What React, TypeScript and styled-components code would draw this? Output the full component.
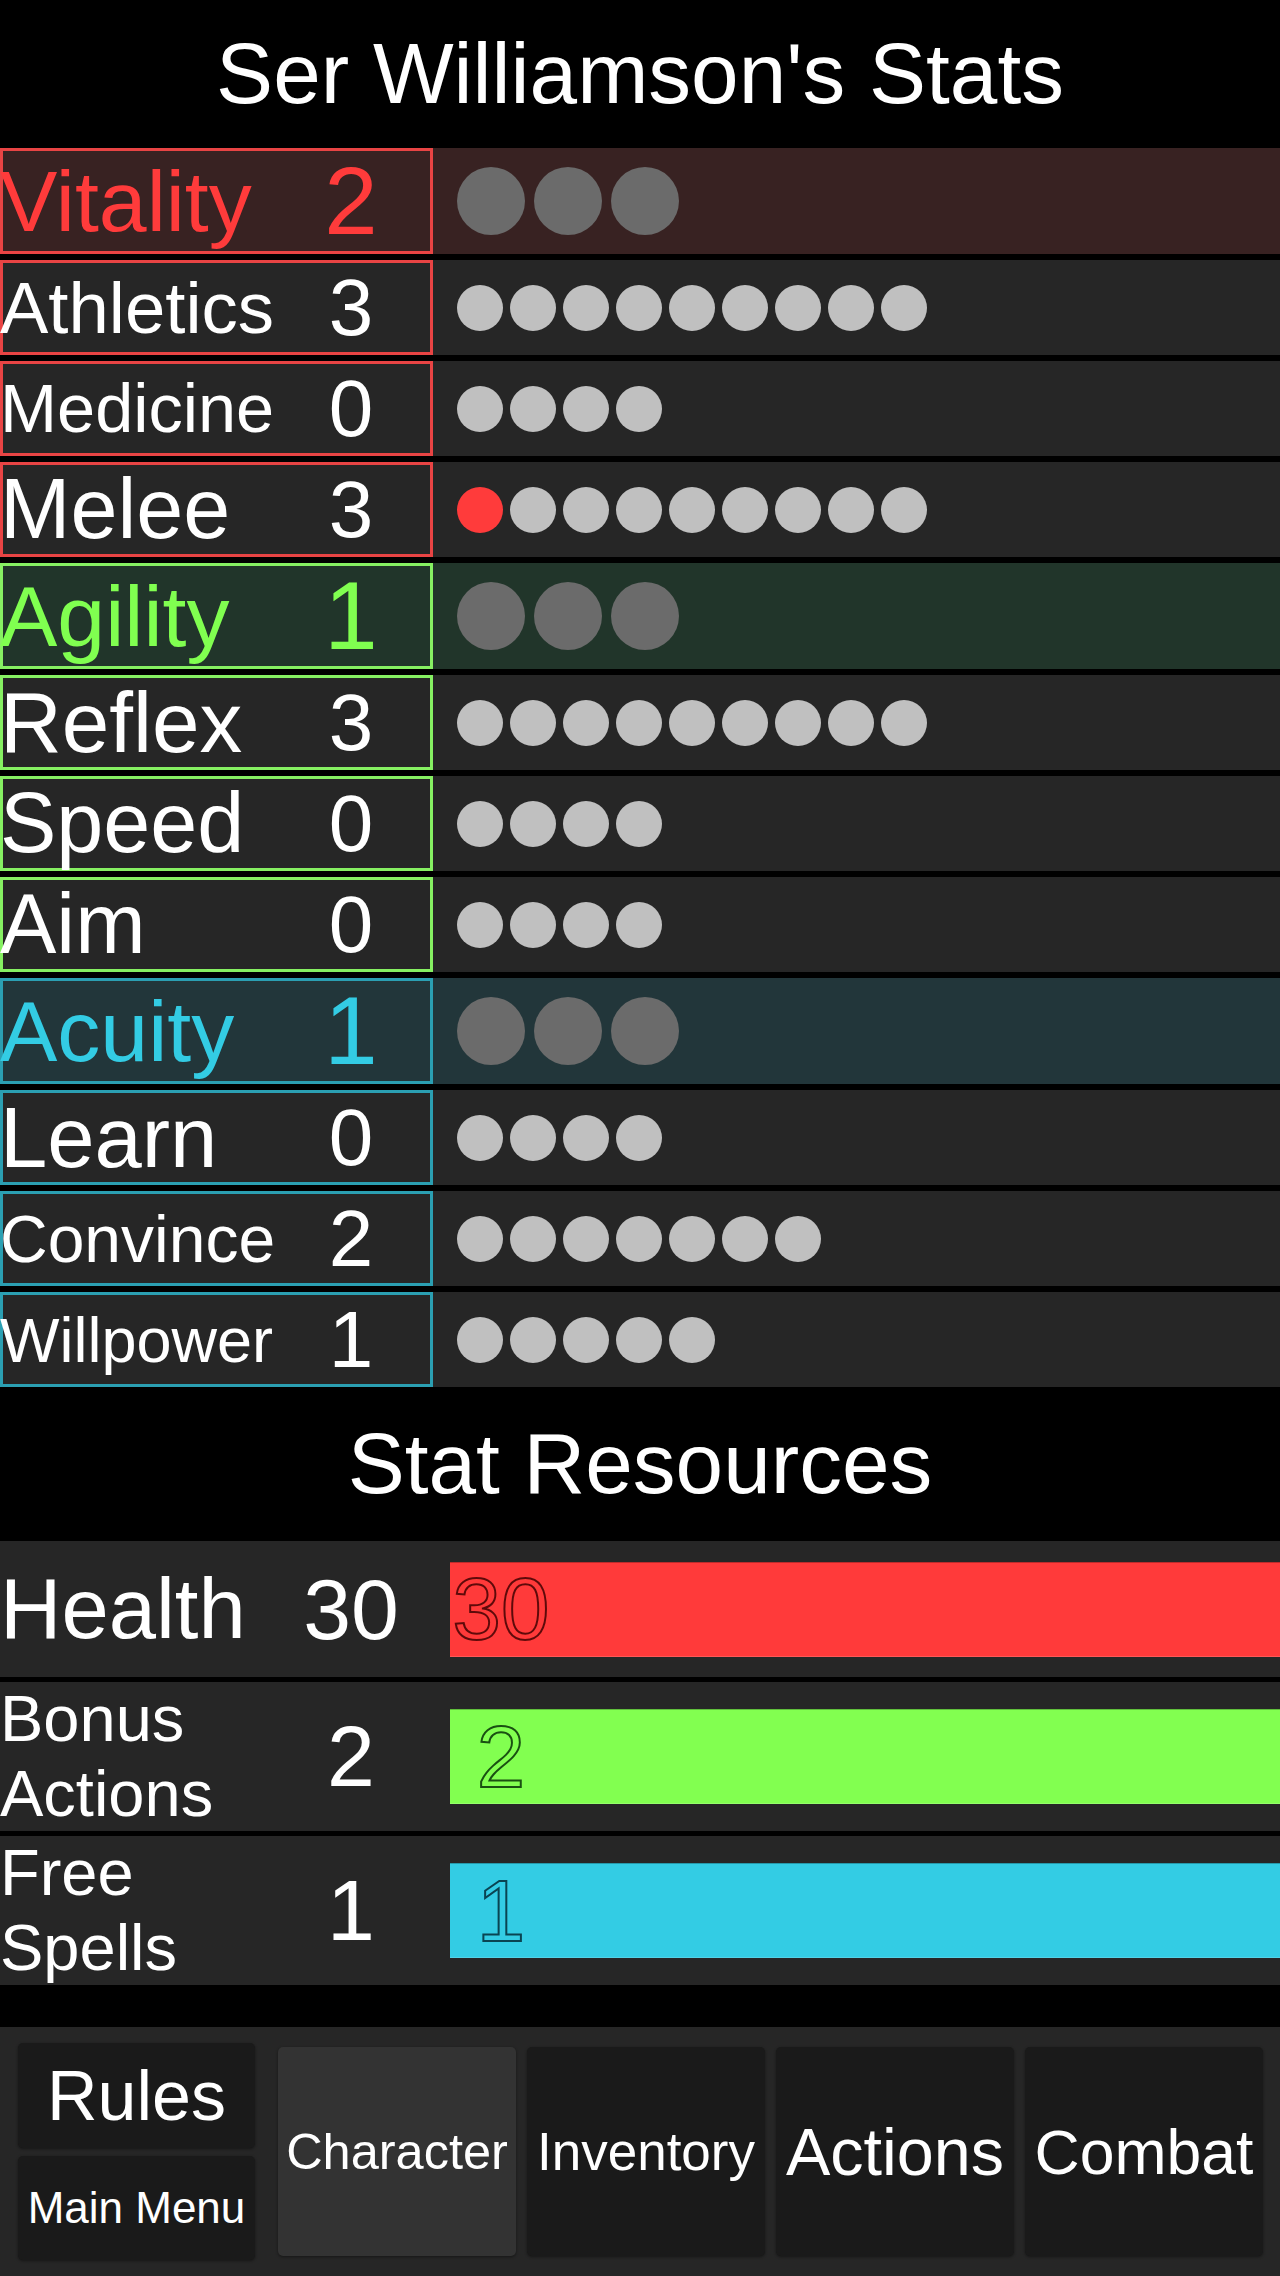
import React from 'react'
import styled, { createGlobalStyle } from 'styled-components'

interface SubStat {
    name: string
    value: number
    dots: number
    size: number
    firstRed?: boolean
}

interface StatGroup {
    name: string
    value: number
    size: number
    color: string
    border: string
    tint: string
    subs: SubStat[]
}

interface Resource {
    label: string[]
    value: number
    size: number
    color: string
    stroke: string
}

const groups: StatGroup[] = [
    {
        name: 'Vitality', value: 2, size: 86, color: '#ff3b3b', border: '#e84444', tint: '#382222',
        subs: [
            { name: 'Athletics', value: 3, dots: 9, size: 72.5 },
            { name: 'Medicine', value: 0, dots: 4, size: 68.5 },
            { name: 'Melee', value: 3, dots: 9, size: 84.5, firstRed: true },
        ],
    },
    {
        name: 'Agility', value: 1, size: 86, color: '#80ff50', border: '#86f062', tint: '#21352a',
        subs: [
            { name: 'Reflex', value: 3, dots: 9, size: 85.5 },
            { name: 'Speed', value: 0, dots: 4, size: 84.5 },
            { name: 'Aim', value: 0, dots: 4, size: 84.5 },
        ],
    },
    {
        name: 'Acuity', value: 1, size: 86, color: '#33cce4', border: '#2b9fb2', tint: '#22363a',
        subs: [
            { name: 'Learn', value: 0, dots: 4, size: 85 },
            { name: 'Convince', value: 2, dots: 7, size: 66 },
            { name: 'Willpower', value: 1, dots: 5, size: 63 },
        ],
    },
]

const resources: Resource[] = [
    { label: ['Health'], value: 30, size: 85, color: '#ff3a3a', stroke: '#5e0a0a' },
    { label: ['Bonus', 'Actions'], value: 2, size: 65, color: '#82ff50', stroke: '#1a5012' },
    { label: ['Free', 'Spells'], value: 1, size: 65, color: '#33cce4', stroke: '#0a4452' },
]

const GlobalStyle = createGlobalStyle`
    html, body {
        margin: 0;
        padding: 0;
        background: #000;
    }
    body {
        font-family: "Liberation Sans", Arial, sans-serif;
        color: #fff;
    }
`

const Page = styled.div`
    width: 1280px;
    background: #000;
    display: flex;
    flex-direction: column;
`

const Heading = styled.h1<{ $height: number }>`
    margin: 0;
    height: ${props => props.$height}px;
    display: flex;
    align-items: center;
    justify-content: center;
    font-size: 85.5px;
    font-weight: normal;
    color: #fff;
`

const StatList = styled.div`
    display: flex;
    flex-direction: column;
    gap: 6px;
`

const Row = styled.div<{ $tint: string, $main: boolean }>`
    display: flex;
    height: ${props => props.$main ? 106 : 95}px;
    background: ${props => props.$tint};
`

const LabelBox = styled.div<{ $border: string }>`
    width: 433px;
    flex-shrink: 0;
    display: flex;
    align-items: center;
    box-shadow: inset 0 0 0 3px ${props => props.$border};
`

const Name = styled.span<{ $size: number, $color: string }>`
    width: 271px;
    font-size: ${props => props.$size}px;
    color: ${props => props.$color};
    white-space: nowrap;
`

const Value = styled.span<{ $size: number, $color: string }>`
    width: 160px;
    text-align: center;
    font-size: ${props => props.$size}px;
    color: ${props => props.$color};
`

const DotTrack = styled.div<{ $main: boolean }>`
    flex: 1;
    display: flex;
    align-items: center;
    padding-left: 24px;
    gap: ${props => props.$main ? 9 : 7}px;
`

const Dot = styled.span<{ $main: boolean, $red?: boolean }>`
    width: ${props => props.$main ? 68 : 46}px;
    height: ${props => props.$main ? 68 : 46}px;
    border-radius: 50%;
    background: ${props => props.$main ? '#6b6b6b' : props.$red ? '#ff3b3b' : '#c0c0c0'};
`

const ResourceList = styled.div`
    display: flex;
    flex-direction: column;
    gap: 5px;
`

const ResourceRow = styled.div`
    display: flex;
    align-items: center;
    min-height: 136px;
    background: #262626;
`

const ResourceLabel = styled.div<{ $size: number }>`
    width: 271px;
    flex-shrink: 0;
    font-size: ${props => props.$size}px;
    line-height: 74.5px;
`

const ResourceValue = styled.div`
    width: 160px;
    flex-shrink: 0;
    text-align: center;
    font-size: 86px;
`

const Bar = styled.div<{ $color: string }>`
    flex: 1;
    margin-left: 19px;
    height: 95px;
    display: flex;
    align-items: center;
    background: ${props => props.$color};
    box-shadow: inset 0 1px 0 rgba(0, 0, 0, 0.25), inset 0 -1px 0 rgba(255, 255, 255, 0.15);
`

const BarText = styled.span<{ $stroke: string }>`
    width: 102px;
    text-align: center;
    font-size: 87px;
    color: transparent;
    -webkit-text-stroke: 2px ${props => props.$stroke};
`

const Spacer = styled.div`
    height: 42px;
`

const NavBar = styled.nav`
    height: 249px;
    background: #262626;
    display: flex;
    align-items: center;
    padding: 0 17px 0 18px;
    box-sizing: border-box;
`

const SideColumn = styled.div`
    width: 237px;
    display: flex;
    flex-direction: column;
    gap: 8px;
    margin-right: 23px;
`

const NavButton = styled.div<{ $size: number, $active?: boolean, $height: number }>`
    height: ${props => props.$height}px;
    flex: ${props => props.$height === 209 ? '0 0 238px' : 'none'};
    display: flex;
    align-items: center;
    justify-content: center;
    border-radius: 5px;
    background: ${props => props.$active ? '#333333' : '#1a1a1a'};
    box-shadow: 0 1px 3px rgba(0, 0, 0, 0.45);
    font-size: ${props => props.$size}px;
    color: #fff;
    white-space: nowrap;
`

const Tabs = styled.div`
    display: flex;
    gap: 11px;
`

const tabs = [
    { label: 'Character', size: 50.5, active: true },
    { label: 'Inventory', size: 53 },
    { label: 'Actions', size: 66.5 },
    { label: 'Combat', size: 62.5 },
]

const App: React.FC = () => {
    return (
        <Page>
            <GlobalStyle />
            <Heading $height={148}>Ser Williamson's Stats</Heading>
            <StatList>
                {groups.map(group => (
                    <React.Fragment key={group.name}>
                        <Row $tint={group.tint} $main>
                            <LabelBox $border={group.border}>
                                <Name $size={group.size} $color={group.color}>{group.name}</Name>
                                <Value $size={96} $color={group.color}>{group.value}</Value>
                            </LabelBox>
                            <DotTrack $main>
                                {[0, 1, 2].map(i => <Dot key={i} $main />)}
                            </DotTrack>
                        </Row>
                        {group.subs.map(sub => (
                            <Row key={sub.name} $tint="#262626" $main={false}>
                                <LabelBox $border={group.border}>
                                    <Name $size={sub.size} $color="#fff">{sub.name}</Name>
                                    <Value $size={80} $color="#fff">{sub.value}</Value>
                                </LabelBox>
                                <DotTrack $main={false}>
                                    {Array.from({ length: sub.dots }).map((_, i) => (
                                        <Dot key={i} $main={false} $red={sub.firstRed && i === 0} />
                                    ))}
                                </DotTrack>
                            </Row>
                        ))}
                    </React.Fragment>
                ))}
            </StatList>
            <Heading $height={154}>Stat Resources</Heading>
            <ResourceList>
                {resources.map(res => (
                    <ResourceRow key={res.label.join(' ')}>
                        <ResourceLabel $size={res.size}>
                            {res.label.map(line => <div key={line}>{line}</div>)}
                        </ResourceLabel>
                        <ResourceValue>{res.value}</ResourceValue>
                        <Bar $color={res.color}>
                            <BarText $stroke={res.stroke}>{res.value}</BarText>
                        </Bar>
                    </ResourceRow>
                ))}
            </ResourceList>
            <Spacer />
            <NavBar>
                <SideColumn>
                    <NavButton $size={70} $height={105}>Rules</NavButton>
                    <NavButton $size={44} $height={104}>Main Menu</NavButton>
                </SideColumn>
                <Tabs>
                    {tabs.map(tab => (
                        <NavButton key={tab.label} $size={tab.size} $active={tab.active} $height={209}>
                            {tab.label}
                        </NavButton>
                    ))}
                </Tabs>
            </NavBar>
        </Page>
    )
}

export default App
